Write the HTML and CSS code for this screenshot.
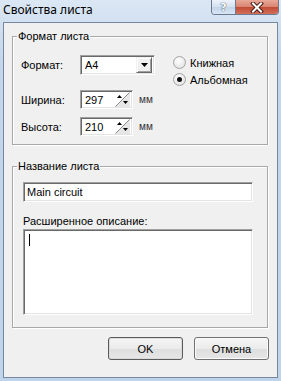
FILE: index.html
```html
<html>
	<head>
		<meta charset="utf-8">
		<link rel="stylesheet" href="styles.css">
	</head>
<body>
<div class="window">
	<div class="titlebar">
		<span class="title">Свойства листа</span>
		<div class="caption-buttons">
			<span class="cap-btn help">?</span>
			<span class="cap-btn close">
				<svg width="14" height="11" viewBox="0 0 14 11">
					<path d="M3 1.5 L11 9.5 M11 1.5 L3 9.5" stroke="#4a1f18" stroke-width="4" stroke-linecap="square"/>
					<path d="M3 1.5 L11 9.5 M11 1.5 L3 9.5" stroke="#fff" stroke-width="2" stroke-linecap="square"/>
				</svg>
			</span>
		</div>
	</div>

	<div class="client">
		<fieldset class="group">
			<legend>Формат листа</legend>
			<div class="format-body">
				<div class="fields">
					<div class="row row-combo">
						<label>Формат:</label>
						<div class="combo">
							<span class="value">A4</span>
							<span class="drop">
								<svg width="7" height="4" viewBox="0 0 7 4"><path d="M0 0 H7 L3.5 4 Z" fill="#000"/></svg>
							</span>
						</div>
					</div>
					<div class="row row-spin">
						<label>Ширина:</label>
						<div class="spin">
							<span class="value">297</span>
							<svg class="arrows" width="15" height="15" viewBox="0 0 15 15">
								<path d="M15 0 V15 H0 Z" fill="#e6e6e6"/>
								<path d="M14.5 0.5 L0.5 14.5" stroke="#8c8c8c" stroke-width="1"/>
								<path d="M2 6 L4.5 3 L7 6 Z" fill="#000"/>
								<path d="M8 9 H13 L10.5 12 Z" fill="#000"/>
							</svg>
						</div>
						<span class="unit">мм</span>
					</div>
					<div class="row row-spin second">
						<label>Высота:</label>
						<div class="spin">
							<span class="value">210</span>
							<svg class="arrows" width="15" height="15" viewBox="0 0 15 15">
								<path d="M15 0 V15 H0 Z" fill="#e6e6e6"/>
								<path d="M14.5 0.5 L0.5 14.5" stroke="#8c8c8c" stroke-width="1"/>
								<path d="M2 6 L4.5 3 L7 6 Z" fill="#000"/>
								<path d="M8 9 H13 L10.5 12 Z" fill="#000"/>
							</svg>
						</div>
						<span class="unit">мм</span>
					</div>
				</div>
				<div class="radios">
					<label class="radio"><span class="circle"></span>Книжная</label>
					<label class="radio checked"><span class="circle"></span>Альбомная</label>
				</div>
			</div>
		</fieldset>

		<fieldset class="group name-group">
			<legend>Название листа</legend>
			<div class="name-body">
				<div class="edit">Main circuit</div>
				<div class="desc-label">Расширенное описание:</div>
				<div class="edit memo"><span class="caret"></span></div>
			</div>
		</fieldset>

		<div class="buttons">
			<span class="button default">OK</span>
			<span class="button">Отмена</span>
		</div>
	</div>
</div>
</body>
</html>
```

FILE: styles.css
```css
	body {
		margin: 0;
		width: 281px;
		height: 381px;
		overflow: hidden;
		background: linear-gradient(#dbe7f4, #c3d6eb 60px, #bfd3ea);
		font-family: "Liberation Sans", Arial, sans-serif;
		font-size: 11px;
		color: #000;
	}
	.window {
		height: 381px;
		display: flex;
		flex-direction: column;
	}

/* title bar */
	.titlebar {
		height: 22px;
		display: flex;
		flex-shrink: 0;
	}
	.title {
		padding: 2px 0 0 3px;
		font-family: "Noto Sans", sans-serif;
		font-size: 12px;
		line-height: 16px;
	}
	.caption-buttons {
		margin-left: auto;
		margin-right: 2px;
		display: flex;
		height: 14px;
		border: 1px solid #6b7a8f;
		border-top: none;
		border-radius: 0 0 4px 4px;
		overflow: hidden;
	}
	.cap-btn {
		display: flex;
		align-items: center;
		justify-content: center;
	}
	.help {
		width: 23px;
		border-right: 1px solid #6b7a8f;
		background: linear-gradient(#eef3fa, #d3e0ef 50%, #c2d4e9 51%, #d9e6f4);
		color: #fff;
		font-family: "DejaVu Sans", sans-serif;
		font-weight: bold;
		font-size: 11px;
		text-shadow: 0 0 1px #3a4a60, 0 0 1px #3a4a60;
	}
	.close {
		width: 42px;
		background: linear-gradient(#e9a898, #d7836f 50%, #c24a33 51%, #d2705b);
	}

/* client area */
	.client {
		flex: 1;
		margin: 0 3px 3px;
		border: 1px solid #7687a0;
		background: #f0f0f0;
		padding: 0 8px;
		display: flex;
		flex-direction: column;
	}

	.group {
		width: 256px;
		box-sizing: border-box;
		margin: 7px 0 0;
		padding: 0;
		border: 1px solid #a8a8a8;
		box-shadow: inset 1px 1px 0 #fff, 1px 1px 0 #fff;
		min-width: 0;
	}
	.group legend {
		margin-left: 4px;
		padding: 0 1px;
		line-height: 13px;
		background: #f0f0f0;
	}
	.name-group {
		margin-top: 15px;
	}

	.format-body {
		display: flex;
		padding: 12px 0 8px 8px;
	}
	.fields {
		width: 134px;
	}
	.row {
		display: flex;
		align-items: center;
		height: 20px;
	}
	.row label {
		width: 59px;
		flex-shrink: 0;
	}
	.row-spin {
		height: 19px;
		margin-top: 15px;
	}
	.row-spin.second {
		margin-top: 8px;
	}

/* sunken edit boxes */
	.combo, .spin, .edit {
		box-sizing: border-box;
		background: #fff;
		border: 1px solid;
		border-color: #a0a0a0 #fff #fff #a0a0a0;
		box-shadow: inset 1px 1px 0 #696969, inset -1px -1px 0 #e3e3e3;
		display: flex;
		align-items: center;
	}
	.combo {
		width: 75px;
		height: 20px;
		padding: 2px;
	}
	.value {
		flex: 1;
		padding-left: 2px;
	}
	.drop {
		width: 16px;
		height: 16px;
		box-sizing: border-box;
		background: #f0f0f0;
		border: 1px solid;
		border-color: #f0f0f0 #696969 #696969 #f0f0f0;
		box-shadow: inset 1px 1px 0 #fff, inset -1px -1px 0 #a0a0a0;
		display: flex;
		align-items: center;
		justify-content: center;
	}
	.spin {
		width: 53px;
		height: 19px;
		padding: 2px;
	}
	.arrows {
		display: block;
	}
	.unit {
		margin-left: 6px;
		font-size: 10px;
		color: #333;
	}

/* radio buttons */
	.radios {
		margin-left: 18px;
		padding-top: 1px;
	}
	.radio {
		display: flex;
		align-items: center;
		height: 13px;
		white-space: nowrap;
	}
	.radio + .radio {
		margin-top: 4px;
	}
	.circle {
		width: 13px;
		height: 13px;
		box-sizing: border-box;
		margin-right: 4px;
		border-radius: 50%;
		border: 1px solid #a4a4a4;
		background: radial-gradient(circle at 40% 35%, #fff, #e6e6e6 70%, #d4d4d4);
		display: flex;
		align-items: center;
		justify-content: center;
	}
	.radio.checked .circle::after {
		content: "";
		width: 5px;
		height: 5px;
		border-radius: 50%;
		background: #111;
	}

/* name group */
	.name-body {
		padding: 9px 0 12px 10px;
	}
	.edit {
		width: 230px;
		height: 20px;
		padding-left: 3px;
	}
	.desc-label {
		margin-top: 13px;
		line-height: 13px;
	}
	.memo {
		margin-top: 1px;
		height: 86px;
		align-items: flex-start;
		padding: 4px 0 0 5px;
	}
	.caret {
		width: 1px;
		height: 12px;
		background: #000;
	}

/* dialog buttons */
	.buttons {
		margin-top: 9px;
		display: flex;
		justify-content: flex-end;
		gap: 11px;
	}
	.button {
		width: 75px;
		height: 23px;
		box-sizing: border-box;
		border: 1px solid #707070;
		border-radius: 3px;
		background: linear-gradient(#f6f6f6, #ebebeb 50%, #dedede 51%, #e6e6e6);
		box-shadow: inset 0 0 0 1px #fbfbfb;
		display: flex;
		align-items: center;
		justify-content: center;
	}
	.button.default {
		border-color: #5a5a5a;
		box-shadow: inset 0 0 0 1px #dadada;
	}
```
